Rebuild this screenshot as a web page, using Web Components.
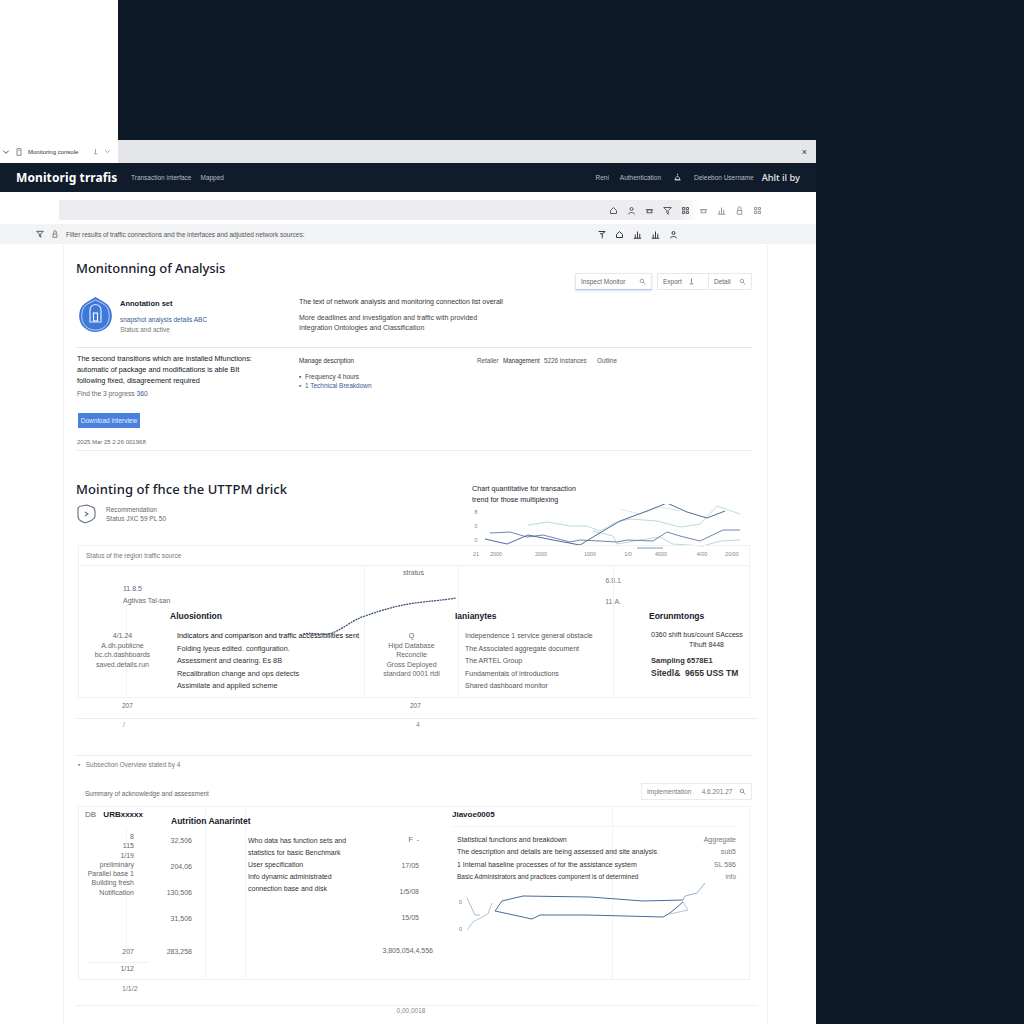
<!DOCTYPE html>
<html lang="en">
  <head>
    <meta charset="utf-8" />
    <title>Monitoring traffic</title>
    <style>
      html, body { margin: 0; padding: 0; background: #0e1928; overflow: hidden; }
      body { font-family: "Liberation Sans", Arial, sans-serif; color: #222; }
    </style>
  </head>
  <body>
    <app-page>
      <tab-bar></tab-bar>
      <top-nav></top-nav>
      <address-row></address-row>
      <filter-row></filter-row>
      <report-card>
        <analysis-section></analysis-section>
        <traffic-section></traffic-section>
        <audit-section></audit-section>
      </report-card>
    </app-page>

    <script>
      const define = (name, css, html) => {
        customElements.define(name, class extends HTMLElement {
          constructor() {
            super();
            this.attachShadow({mode: 'open'}).innerHTML = `<style>${css}</style>${html}`;
          }
        });
      };

      const ico = (d, size = 9, color = 'currentColor') =>
        `<svg width="${size}" height="${size}" viewBox="0 0 12 12" fill="none" stroke="${color}" stroke-width="1.3"><path d="${d}"/></svg>`;

      const HOUSE = 'M2 10V6l4-4 4 4v4z';
      const PERSON = 'M4 4a2 2 0 1 0 4 0a2 2 0 1 0-4 0M2 11c0-3 8-3 8 0';
      const CLOUD = 'M2 9h8M3 9V5h6v4M1 5h10';
      const FUNNEL = 'M1 2h10L7 6v5L5 9V6z';
      const LOCK = 'M3 6h6v5H3zM4 6V3a2 2 0 0 1 4 0v3';
      const GRID = 'M2 2h3v3H2zM7 2h3v3H7zM2 7h3v3H2zM7 7h3v3H7z';
      const FLAG = 'M2 2h9L7 5v6M7 5H4';
      const BARS = 'M1 11h10M3 11V6M6 11V2M9 11V5';
      const LENS = 'M2 5a3 3 0 1 0 6 0a3 3 0 1 0-6 0M7 7l4 4';
      const vline = (x, c = '#f3f4f6') => `linear-gradient(${c},${c}) ${x}px 0/1px 100% no-repeat`;

      define('app-page', `
        :host { display: grid; grid-template-columns: 816px 208px; grid-template-rows: 140px 884px; width: 1024px; height: 1024px; overflow: hidden; background: #0e1928; }
        .blank { background: #fff; width: 118px; }
        .win { grid-column: 1; grid-row: 2; display: flex; flex-direction: column; background: #fff; overflow: hidden; }
      `, `<div class="blank"></div><div></div><div class="win"><slot></slot></div>`);

      define('tab-bar', `
        :host { display: flex; justify-content: space-between; align-items: center; height: 23px; background: #e5e6ea; color: #333; font-size: 6px; }
        .tab { width: 118px; height: 23px; background: #fff; display: flex; align-items: center; box-sizing: border-box; padding-left: 2px; gap: 5px; white-space: nowrap; }
        .tab b { font-weight: 400; width: 56px; margin-right: 3px; }
        .x { margin-right: 9px; font-size: 9px; }
      `, `<div class="tab">${ico('M2 4l4 4 4-4', 8)}${ico('M3 1h6v10H3zM5 4h2', 8, '#777')}<b>Monitoring console</b>${ico('M6 2v7M3 10h6', 7, '#888')}${ico('M2 4l4 4 4-4', 7, '#888')}</div><span class="x">×</span>`);

      define('top-nav', `
        :host { display: flex; align-items: center; height: 29px; background: #101b2b; color: #b9bec6; font-size: 6.5px; padding: 0 16px; white-space: nowrap; }
        b { color: #fff; font: 700 12px "Noto Sans", sans-serif; letter-spacing: .1px; width: 115px; }
        .l { display: flex; gap: 9px; }
        .r { margin-left: auto; display: flex; gap: 11px; align-items: center; }
        strong { color: #e8eaee; font: 500 9.3px "Noto Sans", sans-serif; margin-left: -3px; }
      `, `<b>Monitorig trrafis</b><div class="l"><span>Transaction interface</span><span>Mapped</span></div>
          <div class="r"><span>Reni</span><span>Authentication</span><span style="margin:0 1px;display:flex">${ico('M6 1v2M3 9c1-6 5-6 6 0zM2 9h8', 9, '#cfd3d8')}</span><span>Deleebon Username</span><strong>Ahlt il by</strong></div>`);

      define('address-row', `
        :host { display: block; height: 32px; background: #fff; box-sizing: border-box; padding: 8px 0 4px 59px; }
        .bar { height: 20px; width: 711px; background: linear-gradient(90deg, #ebedf0 0, #ebedf0 620px, #fff 640px); display: flex; align-items: center; justify-content: flex-end; gap: 9px; color: #555; padding-right: 8px; box-sizing: border-box; }
      `, `<div class="bar">${[HOUSE, PERSON, CLOUD, FUNNEL, GRID, CLOUD, BARS, LOCK, GRID].map((d, i) => ico(d, 9, i > 4 ? '#999' : '#555')).join('')}</div>`);

      define('filter-row', `
        :host { display: flex; align-items: center; height: 20px; margin-bottom: 2px; background: #f2f3f5; color: #555; font-size: 6.5px; padding-left: 36px; white-space: nowrap; }
        span { margin-left: 7px; letter-spacing: -.02px; }
        .r { margin-left: auto; margin-right: 138px; display: flex; gap: 9px; color: #333; }
      `, `${ico(FUNNEL, 8, '#444')}<i style="width:7px"></i>${ico(LOCK, 8, '#777')}<span>Filter results of traffic connections and the interfaces and adjusted network sources:</span>
          <div class="r">${[FLAG, HOUSE, BARS, BARS, PERSON].map(d => ico(d, 9)).join('')}</div>`);

      define('report-card', `
        :host { display: block; margin-left: 63px; width: 705px; height: 778px; box-sizing: border-box; border: solid #eef0f2; border-width: 0 1px; }
      `, `<slot></slot>`);

      const BASE = `
        * { box-sizing: border-box; }
        p, h2, h3 { margin: 0; white-space: nowrap; font-weight: 400; }
        h2 { font: 500 13px/20px "Noto Sans", sans-serif; color: #15202e; letter-spacing: .1px; }
        h3 { font: 700 8px/12px "Liberation Sans", sans-serif; color: #16202c; }
        .g { color: #777; } .d { color: #333; } .b { color: #3a5a96; }
      `;

      define('analysis-section', BASE + `
        :host { display: block; height: 204px; margin: 0 15px 0 12px; border-bottom: 1px solid #eceef0; font-size: 7px; color: #444; }
        .head { display: flex; justify-content: space-between; height: 44px; padding-top: 12px; }
        .head h2 { letter-spacing: -.05px; }
        .tools { display: flex; gap: 5px; align-self: flex-end; }
        .tool { height: 17px; border: 1px solid #e6e8ec; display: flex; align-items: center; justify-content: space-between; padding: 0 5px; gap: 8px; color: #666; font-size: 6.5px; }
        .tool.on { width: 77px; border-bottom: 1px solid #b9c8e6; box-shadow: 0 1px 2px #d8e0f0; }
        .two { width: 95px; padding: 0; }
        .two div { flex: 1; display: flex; justify-content: space-between; align-items: center; padding: 0 5px; height: 100%; white-space: nowrap; gap: 2px; }
        .two div + div { border-left: 1px solid #e6e8ec; }
        .top { display: grid; grid-template-columns: 223px 1fr; height: 58px; border-bottom: 1px solid #e3e5e9; }
        .id { display: flex; padding: 6px 0 0 2px; gap: 7px; }
        .id .t { padding-top: 2px; line-height: 10px; }
        .id h3 { font-size: 7.5px; margin-bottom: 5px; }
        .rt { padding-top: 7px; line-height: 10px; }
        .rt p:first-child { margin-bottom: 6px; color: #333; }
        .bot { display: grid; grid-template-columns: 223px 1fr; }
        .lt { padding: 5px 0 0 1px; }
        .lt p { font: 400 7.3px/11px "Liberation Sans", sans-serif; color: #111820; }
        .lt p.g { font-size: 6.7px; line-height: 13px; padding-top: 1px; color: #667; }
        .btn { width: 62px; height: 15px; margin: 13px 0 7px 1px; background: #4a80dd; color: #e8effc; font-size: 6.5px; display: flex; align-items: center; justify-content: center; }
        .cols { display: grid; grid-template-columns: 178px 26px 41px 53px auto; padding-top: 7px; line-height: 11px; color: #555; font-size: 6.3px; white-space: nowrap; }
        .sub { padding-top: 6px; line-height: 9px; font-size: 6.5px; }
      `, `
        <div class="head"><h2>Monitonning of Analysis</h2>
          <div class="tools">
            <div class="tool on"><span>Inspect Monitor</span>${ico(LENS, 7, '#888')}</div>
            <div class="tool two"><div><span>Export</span>${ico('M6 1v7M3 10h6', 7, '#555')}</div><div><span>Detail</span>${ico(LENS, 7, '#888')}</div></div>
          </div></div>
        <div class="top">
          <div class="id">
            <svg width="35" height="37" viewBox="0 0 35 37"><path d="M17.5 1 C22 4 27 6 30 9 C36 16 35 28 27 33 C21 37 13 37 8 33 C0 28 -1 16 5 9 C8 6 13 4 17.5 1Z" fill="#3f78d6"/><path d="M17.5 4 C22 6 26 8 28.5 10.5 C33 17 32 27 26 31.5 C21 35 14 35 9 31.5 C3 27 2 17 6.5 10.5 C9 8 13 6 17.5 4Z" fill="none" stroke="#dce7f8" stroke-width=".8"/><path d="M12 26V14a5.5 5.5 0 0 1 11 0V26Z" fill="none" stroke="#dce7f8" stroke-width="1.2"/><rect x="15.5" y="17" width="4" height="8" fill="none" stroke="#fff" stroke-width="1.1"/></svg>
            <div class="t"><h3>Annotation set</h3><p class="b" style="margin-top:5px;font-size:6.5px">snapshot analysis details  ABC</p><p class="g" style="font-size:6.5px">Status and active</p></div>
          </div>
          <div class="rt"><p>The text of network analysis and monitoring connection list overall</p><p>More deadlines and investigation and traffic with provided</p><p>Integration Ontologies and Classification</p></div>
        </div>
        <div class="bot">
          <div class="lt">
            <p>The second transitions which are installed Mfunctions:</p><p>automatic of package and modifications is able BIt</p><p>following fixed, disagreement required</p><p class="g">Find the 3 progress <span class="b">360</span></p>
            <div class="btn">Download interview</div>
            <p class="g" style="font-size:6px">2025 Mar 25 2:26 001968</p>
          </div>
          <div>
            <div class="cols"><span class="d">Manage description</span><span>Retailer</span><span class="d">Management</span><span>5226 Instances</span><span>Outline</span></div>
            <div class="sub"><p>▪ &nbsp;Frequency 4 hours</p><p class="b">▪ &nbsp;1 Technical Breakdown</p></div>
          </div>
        </div>
      `);

      const lines = (color, w, pts) => `<polyline fill="none" stroke="${color}" stroke-width="${w}" points="${pts}"/>`;

      define('traffic-section', BASE + `
        :host { display: block; position: relative; height: 304px; margin: 0 15px 0 12px; border-bottom: 1px solid #e9ebee; font-size: 7px; color: #444; }
        .upper { display: grid; grid-template-columns: 396px 280px; height: 94px; }
        .ttl { padding-top: 28px; }
        .meta { display: flex; gap: 10px; padding: 5px 0 0 1px; line-height: 9px; color: #666; font-size: 6.5px; }
        .meta div { padding-top: 1px; }
        .chart { margin-top: 32px; height: 62px; position: relative; }
        .chart p { font: 400 7.2px/11px "Liberation Sans", sans-serif; color: #1c2530; }
        .chart svg { display: block; margin-top: -1px; }
        .box { margin: 0 2px; height: 153px; border: 1px solid #f0f1f3; position: relative; }
        .bh { height: 20px; line-height: 20px; padding-left: 7px; border-bottom: 1px solid #eef0f2; color: #777; font-size: 6.5px; }
        .grid { display: grid; grid-template-columns: 87px 198px 82px 167px 137px; height: 132px; }
        .grid > div { position: relative; }
        .c1 { padding-top: 17px; text-align: center; color: #666; line-height: 9.5px; background: ${vline(47)}; background-position: 47px 35px; }
        .c1 .lab { text-align: left; padding-left: 44px; line-height: 12px; height: 48px; color: #667; white-space: nowrap; }
        .c2 { padding: 44px 0 0 4px; }
        .c2 ul, .c4 ul { margin: 8px 0 0 7px; padding: 0; list-style: none; line-height: 12.5px; }
        .c2 li { color: #333; font-size: 7.3px; white-space: nowrap; }
        .c2 li:first-child { color: #111; }
        .c3 { text-align: center; padding: 0 0 0 12px; line-height: 9.5px; color: #666; border-left: 1px solid #f1f2f4; }
        .c3 .st { padding-left: 4px; height: 65px; padding-top: 2px; }
        .c4 { padding: 44px 0 0 9px; background: ${vline(12)}; }
        .c4 ul { margin-left: 10px; color: #555; }
        .c4 li { white-space: nowrap; }
        .c4 .up { position: absolute; right: -8px; top: 4px; text-align: right; line-height: 21px; color: #777; }
        .c5 { padding: 44px 0 0 37px; border-left: 1px solid #f1f2f4; }
        .c5 p { line-height: 10px; color: #333; }
        .c5 .big { font: 700 7.5px/13px "Liberation Sans", sans-serif; color: #333; }
        .foot { display: grid; grid-template-columns: 288px 1fr; margin-top: 2px; height: 19px; line-height: 12px; border-bottom: 1px solid #eceef0; padding-left: 46px; color: #666; font-size: 6.5px; margin-right: -6px; }
        .foot2 { display: grid; grid-template-columns: 293px 1fr; padding-left: 47px; line-height: 12px; color: #888; }
        .curve { position: absolute; left: 0; top: 0; pointer-events: none; }
      `, `
        <div class="upper">
          <div class="ttl"><h2>Mointing of fhce the UTTPM drick</h2>
            <div class="meta"><svg width="19" height="20" viewBox="0 0 19 20" fill="none" stroke="#5d7086" stroke-width="1.1"><path d="M9.5 1 L14 2.5 C17 3 18 5 18 8 V12 C18 15 15 16 13 17 L8 19 L4 17 C2 16 1 14 1 12 V5 C1 3 3 2 5 2Z"/><path d="M8 8l3 2-3 2"/></svg><div><p>Recommendation</p><p>Status JXC 59 PL 50</p></div></div>
          </div>
          <div class="chart"><p>Chart quantitative for transaction</p><p>trend for those multiplexing</p>
            <svg width="280" height="62" viewBox="472 505 280 62" font-family="Liberation Sans" font-size="5.5" fill="#888">
              <g text-anchor="middle"><text x="476" y="515">8</text><text x="476" y="529">0</text><text x="476" y="543">0</text><text x="476" y="557">21</text>
              <text x="496" y="557">2000</text><text x="541" y="557">2000</text><text x="590" y="557">1000</text><text x="628" y="557">1/0</text><text x="661" y="557">4000</text><text x="702" y="557">4/00</text><text x="732" y="557">20/00</text></g>
              ${lines('#a9d2d0', .8, '528,526 547,523 570,527 587,527 600,532 617,523 630,520 657,522 680,528 700,525 717,507 740,515')}
              ${lines('#cfe2ea', .8, '620,510 640,515 660,508 680,512')}
              ${lines('#a9cbd9', .8, '593,532 613,537 617,545 640,541 660,538 673,545 703,547 720,542 740,541')}
              ${lines('#6f86ab', 1, '490,534 510,533 527,538 543,536 570,543 580,541 600,542 617,543 627,541 653,542 667,533 680,537 700,542 723,531 740,531')}
              ${lines('#54699a', 1, '485,540 507,545 528,536 553,541 580,546 593,538 620,522 647,512 667,504 687,513 707,519 725,512')}
              ${lines('#a8bad6', 1.5, '637,549 663,549')}
            </svg>
          </div>
        </div>
        <div class="box">
          <div class="bh">Status of the region traffic source</div>
          <div class="grid">
            <div class="c1"><div class="lab">11.8.5<br>Agtivas Tal-san</div><p>4/1.24</p><p>A.dh.publicne</p><p>bc.ch.dashboards</p><p>saved.details.run</p></div>
            <div class="c2"><h3 style="font-size:8.5px">Aluosiontion</h3><ul><li>Indicators and comparison and traffic accessibilities sent</li><li>Folding lyeus edited. configuration.</li><li>Assessment and clearing. Es 8B</li><li>Recalibration change and ops detects</li><li>Assimilate and applied scheme</li></ul></div>
            <div class="c3"><div class="st">stratus</div><p>Q</p><p>Hipd Database</p><p>Reconcile</p><p>Gross Deployed</p><p>standard 0001 rtdl</p></div>
            <div class="c4"><div class="up">6.8.1<br>11.A.</div><h3 style="font-size:8.5px">Ianianytes</h3><ul><li>Independence 1 service general obstacle</li><li>The Associated aggregate document</li><li>The ARTEL Group</li><li>Fundamentals of introductions</li><li>Shared dashboard monitor</li></ul></div>
            <div class="c5"><h3 style="font-size:8.5px;margin-bottom:8px;margin-left:-2px">Eorunmtongs</h3><p>0360 shift bus/count SAccess</p><p style="text-align:center;margin-left:12px">Tlhuft 8448</p><p class="big" style="margin-top:4px">Sampling 6578E1</p><p class="big" style="font-size:8.5px">Sitedl&amp; &nbsp;9655 USS TM</p></div>
          </div>
        </div>
        <div class="foot"><span>207</span><span>207</span></div>
        <div class="foot2"><span>/</span><span>4</span></div>
        <svg class="curve" width="676" height="304" viewBox="76 451 676 304" fill="none"><path d="M303 634 C315 632 322 636 332 633 C345 628 352 620 365 616 C385 609 400 605 415 603 C430 601 445 600 456 598" stroke="#2f4a72" stroke-width="1.2" stroke-dasharray="2 .8"/></svg>
      `);

      define('audit-section', BASE + `
        :host { display: block; position: relative; height: 268px; margin: 0 15px 0 12px; font-size: 7px; color: #555; }
        .crumb { height: 20px; line-height: 18px; padding-left: 2px; font-size: 6.5px; color: #777; white-space: pre; }
        .hd { display: flex; justify-content: space-between; align-items: flex-start; height: 30px; padding-left: 9px; color: #666; font-size: 6.5px; line-height: 11px; }
        .hd > span { margin-top: 12px; }
        .tool { width: 111px; height: 17px; border: 1px solid #e8eaee; display: flex; justify-content: space-between; align-items: center; padding: 0 5px; color: #777; margin-top: 7px; white-space: nowrap; }
        .box { margin: 0 2px; height: 174px; border: 1px solid #f0f1f3; display: grid; grid-template-columns: 87px 82px 198px 1fr; }
        .a { padding: 2px 32px 0 0; text-align: right; line-height: 9.3px; color: #666; background: ${vline(47)}; background-size: 1px 120px; background-position: 47px 22px; white-space: nowrap; }
        .a h3 { text-align: left; margin-bottom: 11px; padding-left: 6px; }
        .a h3 i { font-style: normal; font-weight: 400; margin-right: 5px; color: #666; }
        .a hr { border: 0; border-top: 1px solid #eef0f2; margin: 6px -15px 0 10px; }
        .b2 { padding: 8px 0 0 5px; background: ${vline(39)}, ${vline(79)}; }
        .b2 h3 { overflow: visible; margin-bottom: 8px; font-size: 8.5px; }
        .num { display: flex; flex-direction: column; }
        .num span { width: 21px; height: 26px; line-height: 11px; color: #666; text-align: right; white-space: nowrap; direction: rtl; }
        .c { padding: 28px 0 0 0; position: relative; }
        .c p { line-height: 12px; color: #333; }
        .vals { position: absolute; right: 27px; top: 27px; text-align: right; color: #666; }
        .vals span { display: block; height: 26px; line-height: 11px; }
        .d2 { padding: 2px 13px 0 7px; position: relative; background: ${vline(166)}; }
        .d2 h3 { height: 18px; border-bottom: 1px solid #f3f4f6; margin: 0 0 7px -1px; }
        .d2 .row { display: flex; justify-content: space-between; line-height: 12.3px; padding-left: 4px; color: #333; white-space: nowrap; }
        .d2 .row span + span { color: #777; }
        .d2 svg { display: block; margin: -3px 0 0 5px; }
        .foot { padding: 3px 0 0 46px; color: #777; line-height: 11px; height: 25px; }
        .end { border-top: 1px solid #eef0f2; margin-right: -6px; padding-right: 12px; text-align: center; line-height: 10px; color: #888; font-size: 6.5px; }
      `, `
        <div class="crumb">▪   Subsection Overview stated by 4</div>
        <div class="hd"><span>Summary of acknowledge and assessment</span><div class="tool"><span>Implementation</span><span>&nbsp; 4.6.201.27</span>${ico(LENS, 7, '#777')}</div></div>
        <div class="box">
          <div class="a"><h3><i>DB</i> URBxxxxx</h3><p>8</p><p>115</p><p>1/19</p><p>preliminary</p><p>Parallel base 1</p><p>Building fresh</p><p>Notification</p><p style="margin-top:50px">207</p><hr><p style="padding-top:1px">1/12</p></div>
          <div class="b2"><h3>Autrition Aanarintet</h3><div class="num"><span>32,506</span><span>204,06</span><span>130,506</span><span>31,506</span><span style="padding-top:7px">283,258</span></div></div>
          <div class="c"><p>Who data has function sets and</p><p>statistics for basic Benchmark</p><p>User specification</p><p>Info dynamic administrated</p><p>connection base and disk</p><div class="vals"><span>F &nbsp;-</span><span>17/05</span><span>1/5/08</span><span>15/05</span><span style="padding-top:7px;margin-right:-14px">3,805,054,4,556</span></div></div>
          <div class="d2"><h3>Jiavoe0005</h3>
            <div class="row"><span>Statistical functions and breakdown</span><span>Aggregate</span></div>
            <div class="row"><span>The description and details are being assessed and site analysis</span><span>sub5</span></div>
            <div class="row"><span>1 Internal baseline processes of for the assistance system</span><span>SL 586</span></div>
            <div class="row" style="font-size:6.5px"><span>Basic Administrators and practices component is of determined</span><span>info</span></div>
            <svg width="255" height="58" viewBox="458 880 255 58" fill="none" font-family="Liberation Sans" font-size="5.5">
              <text x="459" y="904" fill="#777">0</text><text x="459" y="931" fill="#777">0</text>
              ${lines('#4a6b9b', 1, '495,911 502,901 523,896 590,897 643,901 683,900')}
              ${lines('#4a6b9b', 1, '495,911 532,919 540,915 587,915 663,917 670,913 683,902')}
              ${lines('#7f9fc2', .8, '683,900 685,896 697,893 705,883')}
              ${lines('#9ab5cf', .8, '683,902 688,910 670,914')}
              ${lines('#8ea9c5', .8, '467,898 475,915 480,915')}
              ${lines('#9ab8cc', .8, '467,930 473,922 488,914 492,903')}
            </svg>
          </div>
        </div>
        <div class="foot"><p>1/1/2</p></div>
        <div class="end">0,00,0018</div>
      `);
    </script>
  </body>
</html>
